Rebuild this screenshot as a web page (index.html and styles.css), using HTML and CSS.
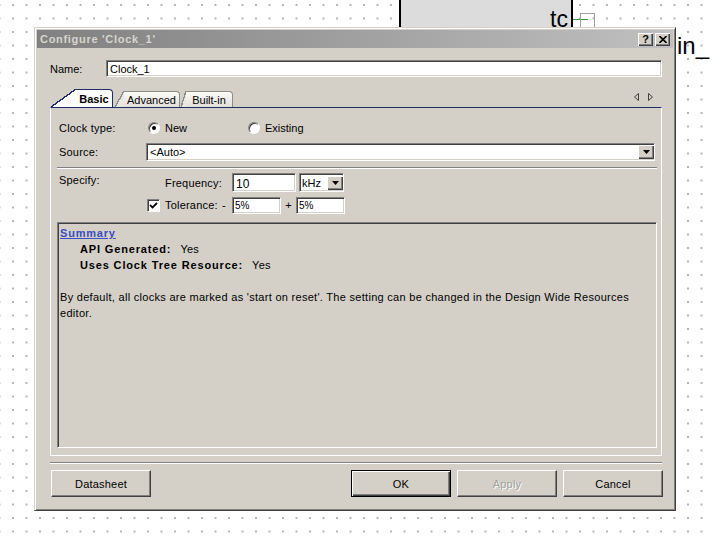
FILE: index.html
```html
<!DOCTYPE html>
<html lang="en">
<head>
    <meta charset="UTF-8">
    <title>Configure 'Clock_1'</title>
    <link rel="stylesheet" href="styles.css">
</head>
<body>
    <div class="canvas">
        <!-- schematic parts behind the dialog -->
        <div class="part"><span class="part-name">tc</span></div>
        <div class="pin-wire"></div>
        <div class="pin-box"></div>
        <div class="net-label">Pin_</div>

        <div class="dialog">
            <div class="titlebar">
                <span class="title">Configure 'Clock_1'</span>
                <div class="title-btns">
                    <span class="tbtn">?</span>
                    <span class="tbtn">
                        <svg width="8" height="7" viewBox="0 0 8 7"><path d="M0.5 0 L7.5 7 M7.5 0 L0.5 7" stroke="#000" stroke-width="1.6"/></svg>
                    </span>
                </div>
            </div>

            <div class="dlg-body">
                <div class="name-row">
                    <span class="name-label">Name:</span>
                    <div class="field name-field">Clock_1</div>
                </div>

                <div class="tabs-row">
                    <div class="tabs">
                        <div class="tab active basic">Basic</div>
                        <div class="tab advanced">Advanced</div>
                        <div class="tab builtin">Built-in</div>
                    </div>
                    <svg class="tab-scroll" width="22" height="10" viewBox="0 0 22 10">
                        <path d="M5.5 1.5 L1.5 5 L5.5 8.5 Z" fill="none" stroke="#404040"/>
                        <path d="M15.5 1.5 L19.5 5 L15.5 8.5 Z" fill="none" stroke="#404040"/>
                    </svg>
                </div>

                <div class="tab-panel">
                    <div class="row">
                        <span class="lbl">Clock type:</span>
                        <div class="option"><span class="radio checked"></span>New</div>
                        <div class="option"><span class="radio"></span>Existing</div>
                    </div>

                    <div class="row source-row">
                        <span class="lbl">Source:</span>
                        <div class="field combo source">
                            <span>&lt;Auto&gt;</span>
                            <span class="drop"><svg width="7" height="4" viewBox="0 0 7 4"><path d="M0 0 H7 L3.5 4 Z" fill="#000"/></svg></span>
                        </div>
                    </div>

                    <div class="sep"></div>

                    <div class="specify">
                        <span class="lbl spec-lbl">Specify:</span>
                        <span class="freq-lbl">Frequency:</span>
                        <div class="freq-inputs">
                            <div class="field freq">10</div>
                            <div class="field combo unit">
                                <span>kHz</span>
                                <span class="drop"><svg width="7" height="4" viewBox="0 0 7 4"><path d="M0 0 H7 L3.5 4 Z" fill="#000"/></svg></span>
                            </div>
                        </div>
                        <span class="check">
                            <svg width="9" height="9" viewBox="0 0 9 9"><path d="M1 4 L3.5 6.5 L8 2" fill="none" stroke="#000" stroke-width="1.8"/></svg>
                        </span>
                        <span class="tol-lbl">Tolerance:</span>
                        <span class="minus">-</span>
                        <div class="tol-inputs">
                            <div class="field tol">5%</div>
                            <span class="plus">+</span>
                            <div class="field tol">5%</div>
                        </div>
                    </div>

                    <div class="summary">
                        <a class="summary-link">Summary</a>
                        <div class="kv"><b>API Generated:</b>Yes</div>
                        <div class="kv"><b>Uses Clock Tree Resource:</b>Yes</div>
                        <p class="note">By default, all clocks are marked as 'start on reset'. The setting can be changed in the Design Wide Resources<br>editor.</p>
                    </div>
                </div>

                <div class="sep bottom-sep"></div>

                <div class="btn-row">
                    <button class="btn datasheet">Datasheet</button>
                    <div class="btn-group">
                        <button class="btn default">OK</button>
                        <button class="btn disabled">Apply</button>
                        <button class="btn">Cancel</button>
                    </div>
                </div>
            </div>
        </div>
    </div>
</body>
</html>
```

FILE: styles.css
```css
:root {
    --face: #d4d0c8;
    --shadow: #808080;
    --dark: #404040;
    --light: #ffffff;
    --tab-navy: #1e2d66;
}

* {
    margin: 0;
    padding: 0;
    box-sizing: border-box;
}

body {
    font-family: 'Liberation Sans', Arial, sans-serif;
    font-size: 11px;
    color: #000;
    background: #fff;
}

/* Schematic canvas */
.canvas {
    position: relative;
    width: 714px;
    height: 538px;
    overflow: hidden;
    background-color: #fff;
    background-image: radial-gradient(circle, #b4b4b4 0.7px, transparent 1.1px);
    background-size: 13.5px 13.5px;
    background-position: 6.25px -1.75px;
}

.part {
    position: absolute;
    left: 399px;
    top: -4px;
    width: 174px;
    height: 34px;
    background: #dcdcdc;
    border-left: 2px solid #000;
    border-right: 2px solid #000;
}

.part-name {
    position: absolute;
    right: 3px;
    top: 11px;
    font-size: 23px;
    line-height: 24px;
}

.pin-wire {
    position: absolute;
    left: 573px;
    top: 19px;
    width: 15px;
    height: 1px;
    background: #2f9a3a;
}

.pin-box {
    position: absolute;
    left: 580px;
    top: 13px;
    width: 15px;
    height: 15px;
    border: 1px solid #a0a0a0;
}

.net-label {
    position: absolute;
    left: 661px;
    top: 34px;
    font-size: 24px;
    line-height: 24px;
}

/* Dialog window */
.dialog {
    position: absolute;
    left: 34px;
    top: 27px;
    width: 642px;
    height: 484px;
    display: flex;
    flex-direction: column;
    padding: 2px;
    background: var(--face);
    border: 1px solid;
    border-color: var(--face) var(--dark) var(--dark) var(--face);
    box-shadow: inset 1px 1px var(--light), inset -1px -1px var(--shadow);
}

.titlebar {
    height: 18px;
    display: flex;
    align-items: center;
    justify-content: space-between;
    padding: 0 3px 0 3px;
    background: linear-gradient(to right, #808080, #c0c0c0);
}

.title {
    font-weight: bold;
    letter-spacing: 0.7px;
    color: #d8d5ce;
}

.title-btns {
    display: flex;
    gap: 2px;
}

.tbtn {
    width: 15px;
    height: 13px;
    display: flex;
    align-items: center;
    justify-content: center;
    font-weight: bold;
    font-size: 11px;
    background: var(--face);
    box-shadow: inset 1px 1px var(--light), inset -1px -1px var(--dark), inset -2px -2px var(--shadow);
}

.dlg-body {
    flex: 1;
    display: flex;
    flex-direction: column;
    padding: 12px 11px 0 13px;
}

/* Sunken edit boxes */
.field {
    background: #fff;
    border: 1px solid;
    border-color: var(--shadow) var(--light) var(--light) var(--shadow);
    box-shadow: inset 1px 1px var(--dark), inset -1px -1px var(--face);
    padding-left: 3px;
    display: flex;
    align-items: center;
    white-space: nowrap;
}

.name-row {
    display: flex;
    align-items: center;
    height: 17px;
}

.name-label {
    width: 56px;
}

.name-field {
    flex: 1;
    height: 17px;
}

/* Tabs */
.tabs-row {
    display: flex;
    justify-content: space-between;
    align-items: flex-end;
    margin-top: 12px;
    height: 18px;
}

.tabs {
    display: flex;
    align-items: flex-end;
    padding-left: 1px;
}

.tab {
    position: relative;
    height: 16px;
    display: flex;
    align-items: center;
    justify-content: center;
    --fill: #e9e7e1;
    --edge: #8d8d86;
    background: linear-gradient(#fbfbf9, #e2e0d9);
    border-top: 1px solid var(--edge);
    border-right: 1px solid var(--edge);
    border-top-right-radius: 4px;
}

.tab::before {
    content: "";
    position: absolute;
    top: -1px;
    bottom: 0;
    right: 100%;
    width: var(--slant);
    background: linear-gradient(to top left, var(--fill) calc(50% - 0.7px), var(--edge) calc(50% - 0.7px), var(--edge) calc(50% + 0.7px), transparent calc(50% + 0.7px));
}

.tab.active {
    height: 18px;
    font-weight: bold;
    --fill: #fcfcfa;
    --edge: var(--tab-navy);
    background: #fcfcfa;
    z-index: 1;
}

.basic {
    --slant: 25px;
    margin-left: 25px;
    width: 37px;
}

.advanced {
    --slant: 9px;
    margin-left: 11px;
    width: 56px;
}

.builtin {
    --slant: 5px;
    margin-left: 6px;
    width: 47px;
}

.tab-scroll {
    margin: 0 7px 5px 0;
}

.tab-panel {
    height: 349px;
    display: flex;
    flex-direction: column;
    padding: 11px 4px 0 6px;
    border: 1px solid var(--light);
    border-top-color: var(--tab-navy);
}

.row {
    display: flex;
    align-items: center;
    height: 18px;
    padding: 0 2px;
}

.lbl {
    width: 87px;
    flex-shrink: 0;
    letter-spacing: 0.2px;
}

.option {
    width: 100px;
    display: flex;
    align-items: center;
    gap: 5px;
    padding-left: 2px;
}

.radio {
    position: relative;
    width: 12px;
    height: 12px;
    border-radius: 50%;
    background: #fff;
    border: 1px solid;
    border-color: var(--shadow) var(--light) var(--light) var(--shadow);
    box-shadow: inset 1px 1px var(--dark);
}

.radio.checked::after {
    content: "";
    position: absolute;
    left: 3px;
    top: 3px;
    width: 4px;
    height: 4px;
    border-radius: 50%;
    background: #000;
}

.source-row {
    margin-top: 6px;
    padding-right: 2px;
}

.combo {
    justify-content: space-between;
    height: 18px;
}

.source {
    flex: 1;
}

.drop {
    width: 16px;
    height: 14px;
    margin-right: 0;
    display: flex;
    align-items: center;
    justify-content: center;
    background: var(--face);
    box-shadow: inset 1px 1px var(--light), inset -1px -1px var(--dark), inset -2px -2px var(--shadow);
}

.sep {
    height: 2px;
    border-top: 1px solid var(--shadow);
    border-bottom: 1px solid var(--light);
}

.tab-panel .sep {
    margin-top: 6px;
}

/* Specify block */
.specify {
    display: grid;
    grid-template-columns: 87px 19px 57px 10px auto;
    grid-template-rows: 19px 18px;
    row-gap: 4px;
    align-items: center;
    margin-top: 4px;
    padding: 0 2px;
}

.spec-lbl {
    grid-column: 1;
    grid-row: 1 / span 2;
    align-self: start;
    margin-top: 1px;
}

.freq-lbl {
    grid-column: 3 / span 2;
    grid-row: 1;
    letter-spacing: 0.2px;
}

.freq-inputs {
    grid-column: 5;
    grid-row: 1;
    display: flex;
    gap: 3px;
}

.freq {
    width: 64px;
    height: 19px;
    font-size: 12px;
    padding-top: 3px;
}

.unit {
    width: 45px;
    height: 19px;
    padding-left: 2px;
}

.check {
    grid-column: 2;
    grid-row: 2;
    margin-left: 1px;
    width: 13px;
    height: 13px;
    display: flex;
    align-items: center;
    justify-content: center;
    background: #fff;
    border: 1px solid;
    border-color: var(--shadow) var(--light) var(--light) var(--shadow);
    box-shadow: inset 1px 1px var(--dark);
}

.tol-lbl {
    grid-column: 3;
    grid-row: 2;
    letter-spacing: 0.2px;
}

.minus {
    grid-column: 4;
    grid-row: 2;
}

.tol-inputs {
    grid-column: 5;
    grid-row: 2;
    display: flex;
    align-items: center;
}

.tol {
    width: 49px;
    height: 17px;
    font-size: 10px;
    padding-left: 2px;
}

.plus {
    width: 15px;
    text-align: center;
}

/* Summary box */
.summary {
    flex: 1;
    margin: 8px 0 7px;
    padding: 2px 1px;
    line-height: 16px;
    border: 1px solid;
    border-color: var(--shadow) var(--light) var(--light) var(--shadow);
    box-shadow: inset 1px 1px var(--dark), inset -1px -1px var(--face);
}

.summary-link {
    display: inline-block;
    padding-left: 1px;
    font-weight: bold;
    letter-spacing: 0.8px;
    color: #3a4cc0;
    text-decoration: underline;
}

.kv {
    padding-left: 21px;
    letter-spacing: 0.2px;
}

.kv b {
    letter-spacing: 0.85px;
    margin-right: 9px;
}

.note {
    margin-top: 16px;
    padding-left: 1px;
    letter-spacing: 0.29px;
}

/* Bottom buttons */
.bottom-sep {
    margin-top: 6px;
}

.btn-row {
    display: flex;
    justify-content: space-between;
    margin-top: 6px;
    margin-right: -1px;
}

.btn {
    width: 100px;
    height: 27px;
    font-family: inherit;
    font-size: 11px;
    letter-spacing: 0.2px;
    color: #000;
    background: var(--face);
    border: 1px solid;
    border-color: var(--light) var(--dark) var(--dark) var(--light);
    box-shadow: inset -1px -1px var(--shadow);
}

.datasheet {
    margin-left: 1px;
}

.btn-group {
    display: flex;
    gap: 6px;
}

.btn.default {
    border: 1px solid #000;
    box-shadow: inset 1px 1px var(--light), inset -1px -1px var(--dark), inset -2px -2px var(--shadow);
}

.btn.disabled {
    color: #a0a0a0;
    text-shadow: 1px 1px #fff;
}
```
